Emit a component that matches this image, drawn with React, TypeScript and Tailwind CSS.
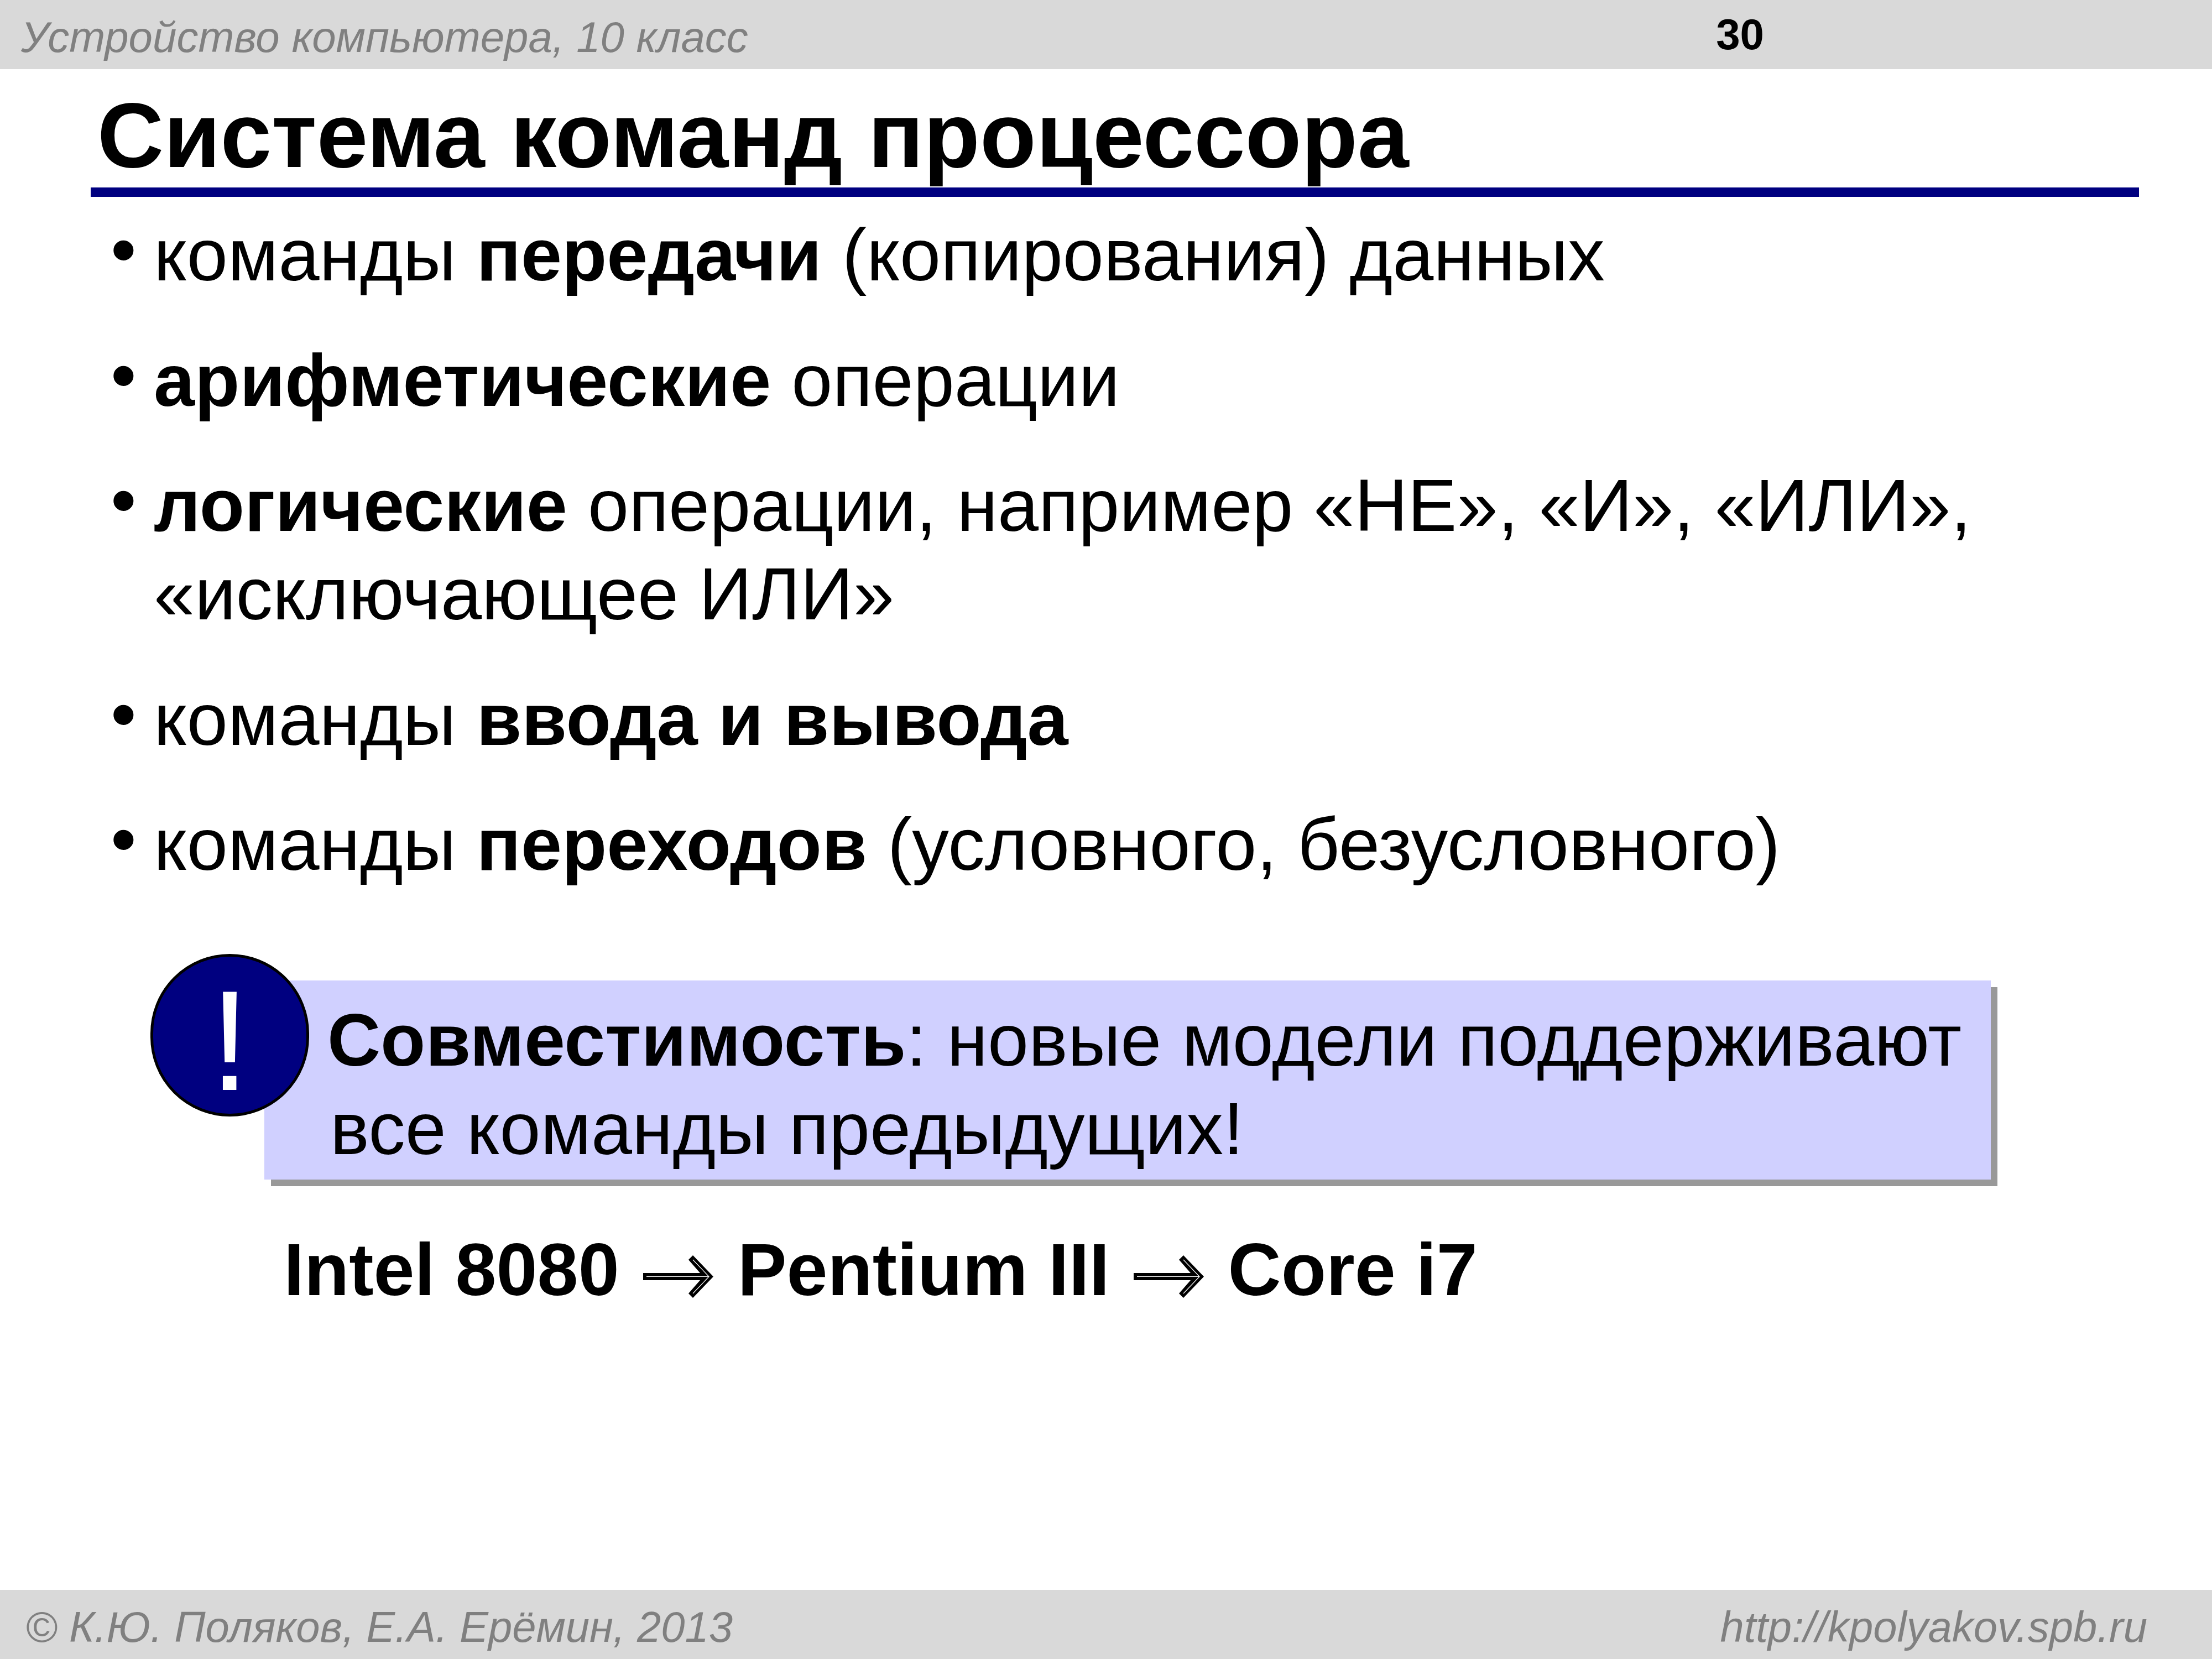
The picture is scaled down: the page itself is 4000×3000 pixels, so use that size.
const Arrow = () => (
  <svg viewBox="0 0 127 77" className="mr-[44px] ml-[43px] h-[77px] w-[127px] shrink-0 translate-y-[12px]">
    <path d="M0 32H103L82 8L90 0L127 38.5L90 77L82 69L103 45H0Z" fill="#000" />
    <path d="M6 38.5H118M90 8L119 38.5L90 69" fill="none" stroke="#fff" strokeWidth="1.2" />
  </svg>
);

const bullets = [
  <>
    команды <b>передачи</b> (копирования) данных
  </>,
  <>
    <b>арифметические</b> операции
  </>,
  <>
    <b>логические</b> операции, например «НЕ», «И», «ИЛИ»,
    <br />
    «исключающее ИЛИ»
  </>,
  <>
    команды <b>ввода и вывода</b>
  </>,
  <>
    команды <b>переходов</b> (условного, безусловного)
  </>,
];

export default function App() {
  return (
    <div className="flex h-[3000px] w-[4000px] flex-col bg-white font-['Liberation_Sans',sans-serif] text-black">
      <header className="flex h-[125px] shrink-0 items-center justify-between bg-[#d9d9d9] pr-[810px] pl-[38px] text-[78px]">
        <span className="pt-[10px] text-[#808080] italic">Устройство компьютера, 10 класс</span>
        <span className="font-bold">30</span>
      </header>

      <h1 className="mt-[30px] ml-[176px] text-[166.5px] leading-[179px] font-bold">
        Система команд процессора
      </h1>
      <div className="mt-[5px] ml-[164px] h-[17px] w-[3704px] bg-[#000080]" />

      <ul className="mt-[25px] ml-[200px] flex flex-col gap-[66.5px] text-[133.2px] leading-[160px]">
        {bullets.map((item, i) => (
          <li key={i} className="flex">
            <span className="w-[78px] shrink-0 -translate-y-[10px]">•</span>
            <div>{item}</div>
          </li>
        ))}
      </ul>

      <div className="relative mt-[166px] ml-[478px] h-[360px] w-[3122px] bg-[#d0d0ff] pt-[28px] pl-[114px] text-[133.1px] leading-[160px] shadow-[12px_12px_0_#999999]">
        <div className="absolute top-[-48px] left-[-206px] flex h-[294px] w-[287px] items-center justify-center rounded-full border-[5px] border-black bg-[#000080] pt-[20px] text-[258px] leading-none text-white">
          !
        </div>
        <b>Совместимость</b>: новые модели поддерживают
        <br />
        <span className="pl-[5px]">все команды предыдущих!</span>
      </div>

      <div className="mt-[83px] ml-[513px] flex items-center text-[133.1px] leading-[160px] font-bold">
        <span>Intel 8080</span>
        <Arrow />
        <span>Pentium III</span>
        <Arrow />
        <span>Core i7</span>
      </div>

      <footer className="mt-auto flex h-[125px] shrink-0 items-center justify-between bg-[#d9d9d9] pt-[9px] pr-[117px] pl-[46px] text-[77.8px] text-[#808080] italic">
        <span>© К.Ю. Поляков, Е.А. Ерёмин, 2013</span>
        <span>http://kpolyakov.spb.ru</span>
      </footer>
    </div>
  );
}
